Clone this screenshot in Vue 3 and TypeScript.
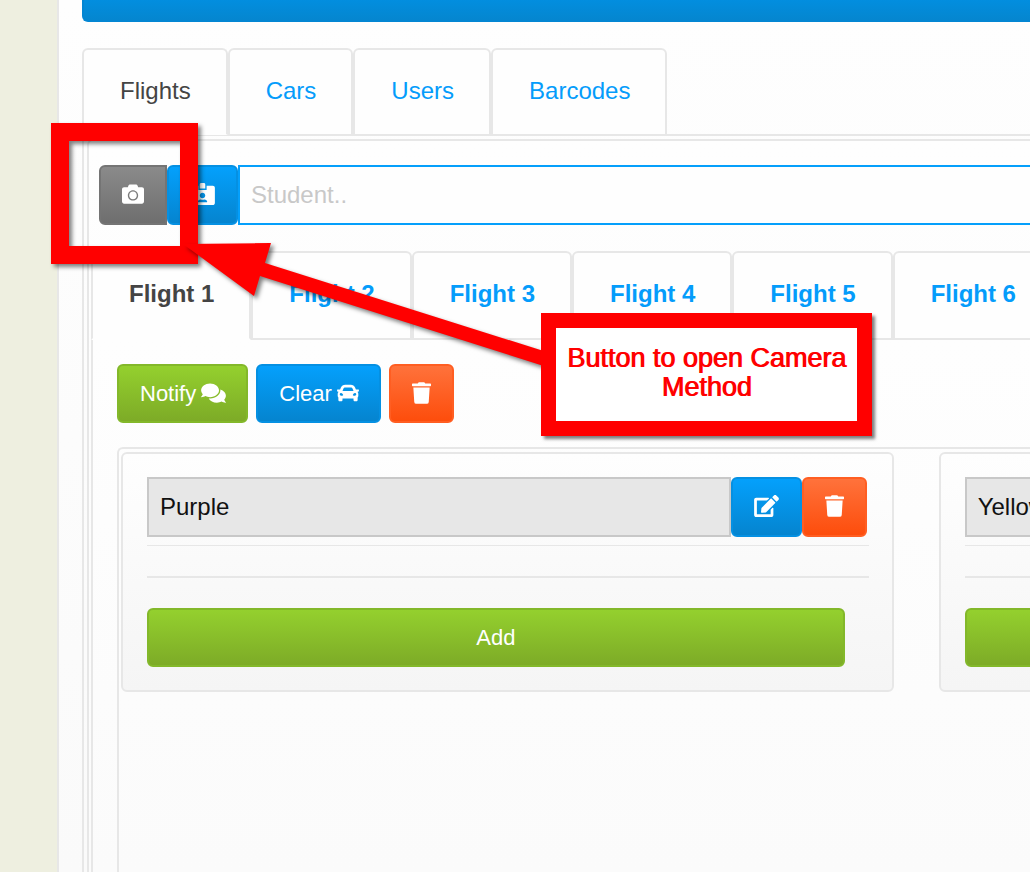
<script setup lang="ts">
import { ref } from 'vue'

interface Glyph {
  box: string
  width: number
  path: string
}

const glyphs: Record<string, Glyph> = {
  camera: {
    box: '0 0 512 512',
    width: 22,
    path: 'M512 144v288c0 26.5-21.5 48-48 48H48c-26.5 0-48-21.5-48-48V144c0-26.5 21.5-48 48-48h88l12.3-32.9c7-18.7 24.9-31.1 44.9-31.1h125.5c20 0 37.9 12.4 44.9 31.1L376 96h88c26.5 0 48 21.5 48 48zM376 288c0-66.2-53.8-120-120-120s-120 53.8-120 120 53.8 120 120 120 120-53.8 120-120zm-32 0c0 48.5-39.5 88-88 88s-88-39.5-88-88 39.5-88 88-88 88 39.5 88 88z',
  },
  badge: {
    box: '0 0 576 512',
    width: 25,
    path: 'M528 64H384v96H192V64H48C21.5 64 0 85.5 0 112v352c0 26.5 21.5 48 48 48h480c26.5 0 48-21.5 48-48V112c0-26.5-21.5-48-48-48zM288 224c35.3 0 64 28.7 64 64s-28.7 64-64 64-64-28.7-64-64 28.7-64 64-64zm93.3 224H194.7c-10.4 0-18.8-10-15.6-19.8 8.3-25.6 32.4-44.2 60.9-44.2h8.2c12.3 5.1 25.7 8 39.8 8s27.6-2.9 39.8-8h8.2c28.5 0 52.6 18.6 60.9 44.2 3.2 9.9-5.2 19.8-15.6 19.8zM352 32c0-17.7-14.3-32-32-32h-64c-17.7 0-32 14.3-32 32v96h128V32z',
  },
  comments: {
    box: '0 0 576 512',
    width: 25,
    path: 'M416 192c0-88.4-93.1-160-208-160S0 103.6 0 192c0 34.3 14.1 65.9 38 92-13.4 30.2-35.5 54.2-35.8 54.5-2.2 2.3-2.8 5.7-1.5 8.7S4.8 352 8 352c36.6 0 66.9-12.3 88.7-25 32.2 15.7 70.3 25 111.3 25 114.9 0 208-71.6 208-160zm122 220c23.9-26 38-57.7 38-92 0-66.9-53.5-124.2-129.3-148.1.9 6.6 1.3 13.3 1.3 20.1 0 105.9-107.7 192-240 192-10.8 0-21.3-.8-31.7-1.9C207.8 439.6 281.8 480 368 480c41 0 79.1-9.2 111.3-25 21.8 12.7 52.1 25 88.7 25 3.2 0 6.1-1.9 7.3-4.8 1.3-2.9.7-6.3-1.5-8.7-.3-.3-22.4-24.2-35.8-54.5z',
  },
  car: {
    box: '0 0 512 512',
    width: 22,
    path: 'M499.99 176h-59.87l-16.64-41.6C406.38 91.63 365.57 64 319.5 64h-127c-46.06 0-86.88 27.63-103.99 70.4L71.87 176H12.01C4.2 176-1.53 183.34.37 190.91l6 24C7.7 220.25 12.5 224 18.01 224h20.07C24.65 235.73 16 252.78 16 272v48c0 16.12 6.16 30.67 16 41.93V416c0 17.67 14.33 32 32 32h32c17.67 0 32-14.33 32-32v-32h256v32c0 17.67 14.33 32 32 32h32c17.67 0 32-14.33 32-32v-54.07c9.84-11.25 16-25.8 16-41.93v-48c0-19.22-8.65-36.27-22.07-48H494c5.51 0 10.31-3.75 11.64-9.09l6-24c1.89-7.57-3.84-14.91-11.65-14.91zm-352.06-17.83c7.29-18.22 24.94-30.17 44.57-30.17h127c19.63 0 37.28 11.95 44.57 30.17L384 208H128l19.93-49.83zM96 319.8c-19.2 0-32-12.76-32-31.9S76.8 256 96 256s48 28.71 48 47.85-28.8 15.95-48 15.95zm320 0c-19.2 0-48 3.19-48-15.95S396.8 256 416 256s32 12.76 32 31.9-12.8 31.9-32 31.9z',
  },
  trash: {
    box: '0 0 448 512',
    width: 19,
    path: 'M432 32H312l-9.4-18.7A24 24 0 0 0 281.1 0H166.8a23.72 23.72 0 0 0-21.4 13.3L136 32H16A16 16 0 0 0 0 48v32a16 16 0 0 0 16 16h416a16 16 0 0 0 16-16V48a16 16 0 0 0-16-16zM53.2 467a48 48 0 0 0 47.9 45h245.8a48 48 0 0 0 47.9-45L416 128H32z',
  },
  edit: {
    box: '0 0 576 512',
    width: 25,
    path: 'M402.6 83.2l90.2 90.2c3.8 3.8 3.8 10 0 13.8L274.4 405.6l-92.8 10.3c-12.4 1.4-22.9-9.1-21.5-21.5l10.3-92.8L388.8 83.2c3.8-3.8 10-3.8 13.8 0zm162-22.9l-48.8-48.8c-15.2-15.2-39.9-15.2-55.2 0l-35.4 35.4c-3.8 3.8-3.8 10 0 13.8l90.2 90.2c3.8 3.8 10 3.8 13.8 0l35.4-35.4c15.2-15.3 15.2-40 0-55.2zM384 346.2V448H64V128h229.8c3.2 0 6.2-1.3 8.5-3.5l40-40c7.6-7.6 2.2-20.5-8.5-20.5H48C21.5 64 0 85.5 0 112v352c0 26.5 21.5 48 48 48h352c26.5 0 48-21.5 48-48V306.2c0-10.7-12.9-16-20.5-8.5l-40 40c-2.2 2.3-3.5 5.3-3.5 8.5z',
  },
}

const sections = ['Flights', 'Cars', 'Users', 'Barcodes']
const flights = ['Flight 1', 'Flight 2', 'Flight 3', 'Flight 4', 'Flight 5', 'Flight 6']
const activeSection = ref('Flights')
const activeFlight = ref('Flight 1')
const student = ref('')
const groups = ref(['Purple', 'Yellow'])
</script>

<template>
  <div class="page">
    <main class="sheet">
      <div class="banner"></div>

      <nav class="tabs sections">
        <a
          v-for="name in sections"
          :key="name"
          href="#"
          class="tab"
          :class="{ active: name === activeSection }"
          @click.prevent="activeSection = name"
        >{{ name }}</a>
      </nav>

      <div class="section">
        <div class="section-body">
          <div class="search">
            <button type="button" class="btn grey" aria-label="Camera">
              <svg class="icon" :viewBox="glyphs.camera.box" :width="glyphs.camera.width" height="22"><path :d="glyphs.camera.path" /></svg>
            </button>
            <button type="button" class="btn blue" aria-label="Student card">
              <svg class="icon" :viewBox="glyphs.badge.box" :width="glyphs.badge.width" height="22"><path :d="glyphs.badge.path" /></svg>
            </button>
            <input v-model="student" class="field student" type="text" placeholder="Student.." aria-label="Student" />
          </div>

          <nav class="tabs flights">
            <a
              v-for="name in flights"
              :key="name"
              href="#"
              class="tab"
              :class="{ active: name === activeFlight }"
              @click.prevent="activeFlight = name"
            >{{ name }}</a>
          </nav>

          <div class="flight">
            <div class="actions">
              <button type="button" class="btn green labelled">
                Notify
                <svg class="icon" :viewBox="glyphs.comments.box" :width="glyphs.comments.width" height="22"><path :d="glyphs.comments.path" /></svg>
              </button>
              <button type="button" class="btn blue labelled">
                Clear
                <svg class="icon" :viewBox="glyphs.car.box" :width="glyphs.car.width" height="22"><path :d="glyphs.car.path" /></svg>
              </button>
              <button type="button" class="btn orange" aria-label="Delete flight">
                <svg class="icon" :viewBox="glyphs.trash.box" :width="glyphs.trash.width" height="22"><path :d="glyphs.trash.path" /></svg>
              </button>
            </div>

            <div class="groups">
              <section v-for="(group, index) in groups" :key="index" class="group">
                <div class="group-name">
                  <input v-model="groups[index]" class="field name" type="text" readonly :aria-label="'Group ' + (index + 1)" />
                  <button type="button" class="btn blue" :aria-label="'Edit ' + group">
                    <svg class="icon" :viewBox="glyphs.edit.box" :width="glyphs.edit.width" height="22"><path :d="glyphs.edit.path" /></svg>
                  </button>
                  <button type="button" class="btn orange" :aria-label="'Delete ' + group">
                    <svg class="icon" :viewBox="glyphs.trash.box" :width="glyphs.trash.width" height="22"><path :d="glyphs.trash.path" /></svg>
                  </button>
                </div>
                <div class="members"></div>
                <button type="button" class="btn green add">Add</button>
              </section>
            </div>
          </div>
        </div>
      </div>
    </main>

    <div class="highlight"></div>
    <svg class="arrow" width="380" height="140" viewBox="0 0 380 140" aria-hidden="true">
      <path d="M3 4L91 3L85 23L370 113V128L80 36L74 56Z" />
    </svg>
    <p class="callout">Button to open Camera Method</p>
  </div>
</template>

<style>
body {
  background: #eeefe0;
}
</style>

<style scoped>
.page {
  --line: #e7e7e7;
  position: relative;
  display: flex;
  min-height: 100vh;
  padding-left: 57px;
  overflow: hidden;
  font-family: 'Liberation Sans', Arial, sans-serif;
  font-size: 24px;
  line-height: 28px;
  color: #444;
}

.page *,
.page {
  box-sizing: border-box;
}

.sheet {
  display: flex;
  flex: 1;
  flex-direction: column;
  min-width: 0;
  padding-left: 23px;
  border-left: 2px solid var(--line);
  background: linear-gradient(#fefefe, #fafafa);
}

.banner {
  height: 22px;
  margin-bottom: 26px;
  border: 2px solid #0386d3;
  border-width: 0 0 2px 2px;
  border-radius: 0 0 0 6px;
  background: linear-gradient(#028edf, #0586cf);
}

.tabs {
  display: flex;
  border-bottom: 2px solid var(--line);
}

.tab {
  flex: none;
  margin-bottom: -2px;
  padding: 27px 35px 29px 36px;
  border: 2px solid var(--line);
  border-radius: 6px 6px 0 0;
  background: #fefefe;
  color: #049cfb;
  text-decoration: none;
  white-space: nowrap;
}

.tab.active {
  border-bottom-color: #fefefe;
  color: #444;
}

.sections .active {
  margin-bottom: -1px;
  border-bottom-width: 1px;
}

.section {
  display: flex;
  flex: 1;
  flex-direction: column;
  padding: 3px 0 0 3px;
  border-left: 2px solid var(--line);
}

.section-body {
  display: flex;
  flex: 1;
  flex-direction: column;
  padding: 24px 0 0 2px;
  border: 2px solid var(--line);
  border-width: 2px 0 0 2px;
  border-radius: 6px 0 0 0;
  background: linear-gradient(#fefefe, #fbfbfb);
}

.search {
  display: flex;
  height: 60px;
  margin: 0 0 26px 8px;
}

.flights {
  font-weight: bold;
}

.flights .tab {
  padding-bottom: 30px;
}

.flight {
  display: flex;
  flex: 1;
  flex-direction: column;
  gap: 24px;
  padding: 24px 0 0 24px;
  border-left: 2px solid var(--line);
  background: linear-gradient(#fefefe, #fbfbfb);
}

.actions {
  display: flex;
  gap: 8px;
}

.btn {
  display: flex;
  flex: none;
  align-items: center;
  justify-content: center;
  gap: 5px;
  padding: 0 21px;
  border: 2px solid;
  border-radius: 6px;
  font-family: inherit;
  font-size: 22px;
  line-height: 26px;
  color: #fff;
}

.actions .btn {
  height: 59px;
}

.labelled {
  padding-right: 20px;
}

.icon {
  display: block;
  margin-bottom: 2px;
  fill: currentColor;
}

.grey {
  border-color: #747474;
  border-radius: 6px 0 0 6px;
  background: linear-gradient(#8a8a8a, #6e6e6e);
}

.blue {
  border-color: #0590e2;
  background: linear-gradient(#04a0fc, #0584cf);
}

.green {
  border-color: #83b82a;
  background: linear-gradient(#94d02e, #7dab27);
}

.orange {
  border-color: #ff5e22;
  background: linear-gradient(#ff723b, #fd4d0c);
}

.field {
  flex: 1;
  min-width: 0;
  margin: 0;
  padding: 0 11px;
  border: 2px solid;
  border-radius: 0;
  outline: none;
  font-family: inherit;
  font-size: 24px;
}

.student {
  border-color: #049ffb;
  border-right: 0;
  background: #fefefe;
  color: #111;
}

.student::placeholder {
  color: #c8c8c8;
  opacity: 1;
}

.name {
  border-color: #c8c8c8;
  background: #e7e7e7;
  color: #111;
}

.groups {
  display: flex;
  flex: 1;
  align-items: flex-start;
  gap: 45px;
  padding: 3px 0 0 2px;
  border: 2px solid var(--line);
  border-width: 2px 0 0 2px;
  border-radius: 6px 0 0 0;
  overflow: hidden;
}

.group {
  flex: 0 0 85%;
  padding: 23px 23px 23px 24px;
  border: 2px solid var(--line);
  border-radius: 6px;
  background: linear-gradient(#fefefe, #f5f5f5);
}

.group-name {
  display: flex;
  height: 60px;
  padding-right: 2px;
}

.members {
  height: 33px;
  margin: 8px 0 30px;
  border-top: 1px solid var(--line);
  border-bottom: 2px solid var(--line);
}

.add {
  width: calc(100% - 24px);
  height: 59px;
}

/* Annotations floating over the page */
.highlight,
.arrow,
.callout {
  position: absolute;
}

.highlight {
  top: 123px;
  left: 51px;
  width: 147px;
  height: 141px;
  border: 18px solid #f00;
  filter: drop-shadow(3px 3px 2px rgba(0, 0, 0, 0.5));
}

.arrow {
  top: 240px;
  left: 180px;
  fill: #f00;
  filter: drop-shadow(3px 3px 2px rgba(0, 0, 0, 0.5));
}

.callout {
  top: 313px;
  left: 541px;
  width: 331px;
  height: 123px;
  margin: 0;
  padding: 16px 8px;
  border: 15px solid #f00;
  background: #fff;
  box-shadow: 3px 3px 3px rgba(0, 0, 0, 0.5);
  color: #f00;
  font-size: 27px;
  line-height: 29px;
  text-align: center;
  text-shadow: 1px 0 #f00;
}
</style>
